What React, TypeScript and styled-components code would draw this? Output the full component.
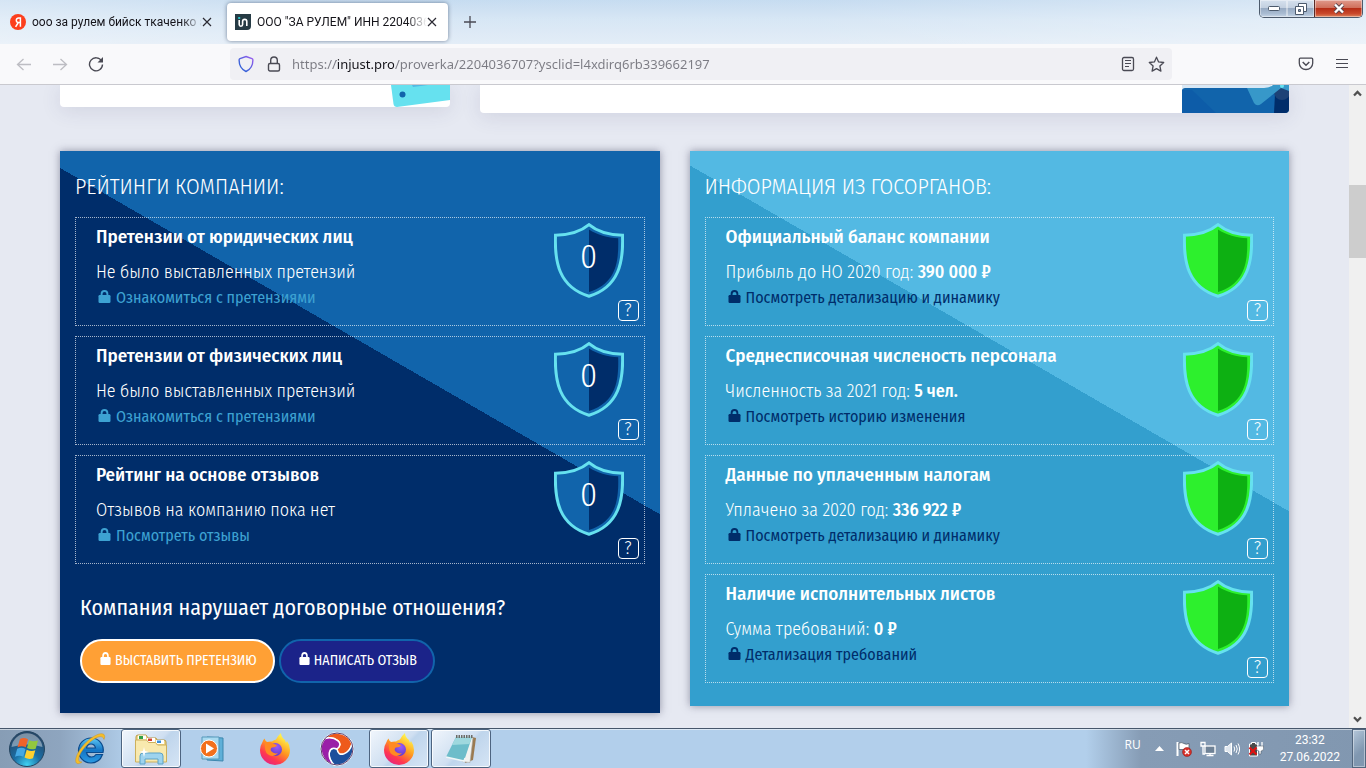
import React from "react";
import styled, { createGlobalStyle } from "styled-components";

const siteFont = `"Fira Sans Condensed", "Liberation Sans Narrow", Roboto, sans-serif`;
const chromeFont = `"Segoe UI", "Open Sans", "Noto Sans", sans-serif`;

const GlobalStyle = createGlobalStyle`
  *, *::before, *::after { box-sizing: border-box; }
  body { margin: 0; background: #e6e9f2; }
  button, input { font: inherit; color: inherit; margin: 0; }
  button { cursor: pointer; }
`;

const Desktop = styled.div`
  display: flex;
  flex-direction: column;
  height: 100vh;
  font-family: ${chromeFont};
`;

/* ---------- browser chrome ---------- */

const TitleBar = styled.header`
  display: flex;
  align-items: flex-start;
  justify-content: space-between;
  flex: none;
  height: 44px;
  background:
    linear-gradient(100deg, rgba(255, 255, 255, 0.35) 0%, rgba(255, 255, 255, 0.1) 30%, rgba(255, 255, 255, 0.1) 60%, rgba(255, 255, 255, 0.4) 100%),
    linear-gradient(#c0d8ef, #d3e4f4 45%, #e0ebf6);
`;

const TabStrip = styled.nav`
  display: flex;
  align-items: center;
  gap: 8px;
  padding: 3px 0 0 2px;
`;

const Tab = styled.div<{ $active?: boolean }>`
  display: flex;
  align-items: center;
  width: ${(p) => (p.$active ? 221 : 217)}px;
  height: 38px;
  padding: 0 ${(p) => (p.$active ? 11 : 7)}px 0 8px;
  border-radius: 4px;
  background: ${(p) => (p.$active ? "#fff" : "transparent")};
  box-shadow: ${(p) => (p.$active ? "0 0 4px rgba(40, 60, 90, 0.6)" : "none")};
`;

const TabLabel = styled.button`
  display: flex;
  align-items: center;
  gap: 6px;
  flex: 1;
  min-width: 0;
  padding: 0;
  border: 0;
  background: none;
  font-family: Roboto, sans-serif;
  font-size: 12px;
  line-height: 20px;
  color: #15141a;
  text-align: left;

  svg { flex: none; }
`;

const TabTitle = styled.span`
  flex: 1;
  overflow: hidden;
  white-space: nowrap;
  mask-image: linear-gradient(to left, transparent, #000 20px);
`;

const IconButton = styled.button`
  display: grid;
  place-items: center;
  flex: none;
  padding: 0;
  border: 0;
  background: none;
  color: #5b5b66;
`;

const NewTab = styled(IconButton)`
  width: 28px;
  height: 38px;
`;

const WindowButtons = styled.div`
  display: flex;
  margin-right: 3px;
  border: 1px solid #4c5a6c;
  border-top: 0;
  border-radius: 0 0 5px 5px;
  overflow: hidden;
`;

const WindowButton = styled.button<{ $close?: boolean }>`
  display: grid;
  place-items: center;
  width: ${(p) => (p.$close ? 48 : 27)}px;
  height: 17px;
  padding: 0;
  border: 0;
  border-left: ${(p) => (p.$close ? "1px solid #5a2a26" : "0")};
  box-shadow: inset 0 0 0 1px rgba(255, 255, 255, 0.4);
  background: ${(p) =>
    p.$close
      ? "linear-gradient(#e09a8c, #d0705c 45%, #b62e17 50%, #c9492c 80%, #dd8660)"
      : "linear-gradient(#d6e1ee, #c3d0e0 45%, #98abc3 50%, #a9bcd2 80%, #c8d6e6)"};
`;

const Toolbar = styled.div`
  display: flex;
  align-items: center;
  flex: none;
  height: 41px;
  padding: 0 14px;
  background: #f9f9fb;
  border-bottom: 1px solid #c9c9cf;
`;

const NavButtons = styled.div`
  display: flex;
  gap: 16px;
  width: 216px;

  ${IconButton} { width: 20px; height: 32px; }
`;

const AddressBar = styled.div`
  display: flex;
  align-items: center;
  gap: 8px;
  flex: 1;
  max-width: 942px;
  height: 32px;
  padding: 0 6px;
  border-radius: 4px;
  background: #f0f0f4;

  ${IconButton} { width: 20px; height: 32px; }
`;

const Address = styled.input`
  flex: 1;
  min-width: 0;
  height: 24px;
  padding: 0;
  border: 0;
  outline: 0;
  font-family: "Noto Sans", sans-serif;
  font-size: 13px;
  color: transparent;
  background: linear-gradient(to right, #7b7b83 44px, #15141a 44px, #15141a 102px, #7b7b83 102px);
  background-clip: text;
`;

const ToolbarEnd = styled.div`
  display: flex;
  gap: 16px;
  margin-left: auto;

  ${IconButton} { width: 20px; height: 32px; }
`;

/* ---------- page ---------- */

const Viewport = styled.div`
  display: flex;
  flex: 1;
  min-height: 0;
`;

const Page = styled.main`
  flex: 1;
  min-width: 0;
  padding: 0 60px;
  overflow-y: auto;
  scrollbar-width: none;
  background: #e6e9f2;
  font-family: ${siteFont};
`;

const Scrollbar = styled.div`
  display: flex;
  flex-direction: column;
  align-items: center;
  justify-content: space-between;
  flex: none;
  width: 17px;
  padding: 5px 0;
  background: linear-gradient(#cdcdcd, #cdcdcd) 0 100px / 17px 73px no-repeat #f0f0f0;
`;

const UpperCards = styled.div`
  display: flex;
  align-items: flex-start;
  gap: 30px;
  height: 66px;
`;

const UpperCard = styled.section<{ $wide?: boolean }>`
  display: flex;
  justify-content: flex-end;
  flex: ${(p) => (p.$wide ? "1" : "0 0 390px")};
  height: ${(p) => (p.$wide ? 28 : 22)}px;
  border-radius: 0 0 4px 4px;
  background: #fff;
  box-shadow: 0 4px 20px rgba(60, 60, 110, 0.12);
  overflow: hidden;
`;

const Panels = styled.div`
  display: flex;
  align-items: flex-start;
  gap: 30px;
`;

const Panel = styled.section<{ $tone: "dark" | "light" }>`
  flex: 1;
  min-width: 0;
  padding: 20px 15px ${(p) => (p.$tone === "dark" ? 30 : 23)}px;
  color: #fff;
  background: ${(p) =>
    p.$tone === "dark"
      ? "linear-gradient(210deg, #1164ab 40%, #002d6a 40%)"
      : "linear-gradient(210deg, #53b9e3 40%, #339fce 40%)"};
  box-shadow: 0 0 8px rgba(60, 60, 90, 0.5);
`;

const PanelTitle = styled.h2`
  margin: 0 0 14px;
  font-size: 22px;
  line-height: 32px;
  font-weight: 300;
  text-transform: uppercase;
`;

const Rows = styled.div`
  display: flex;
  flex-direction: column;
  gap: 10px;
`;

const Row = styled.article`
  display: flex;
  justify-content: space-between;
  padding: 5px 5px 4px 20px;
  border: 1px dotted rgba(255, 255, 255, 0.65);
`;

const RowTitle = styled.h3`
  margin: 0 0 8px;
  font-size: 19px;
  line-height: 28px;
  font-weight: 500;
`;

const RowText = styled.p`
  margin: 0;
  font-size: 18px;
  line-height: 26px;
  font-weight: 300;

  b { font-weight: 500; }
`;

const RowLink = styled.a<{ $tone: "dark" | "light" }>`
  display: flex;
  align-items: center;
  gap: 5px;
  padding-left: 2px;
  font-size: 16px;
  line-height: 26px;
  text-decoration: none;
  color: ${(p) => (p.$tone === "dark" ? "#3da2d2" : "#002d6a")};
`;

const LockSlot = styled.span`
  display: flex;
  padding-bottom: 3px;
`;

const RowAside = styled.div`
  display: flex;
  flex-direction: column;
  align-items: flex-end;
  gap: 2px;
`;

const ShieldBox = styled.div`
  display: grid;
  place-items: center;
  margin-right: 15px;

  > * { grid-area: 1 / 1; }
`;

const Score = styled.span`
  padding-bottom: 8px;
  font-size: 34px;
  line-height: 40px;
  font-weight: 300;
`;

const Help = styled.button`
  width: 21px;
  height: 21px;
  padding: 0;
  border: 1px solid #fff;
  border-radius: 4px;
  background: none;
  font-size: 18px;
  font-weight: 300;
  line-height: 19px;
`;

const Claim = styled.div`
  padding: 29px 5px 0;
`;

const ClaimTitle = styled.h3`
  margin: 0 0 16px;
  font-size: 22px;
  line-height: 30px;
  font-weight: 400;
`;

const ClaimButtons = styled.div`
  display: flex;
  gap: 4px;
`;

const ClaimButton = styled.button<{ $kind: "claim" | "review" }>`
  display: flex;
  align-items: center;
  gap: 4px;
  height: 44px;
  padding: 0 16px 2px 18px;
  border: 2px solid ${(p) => (p.$kind === "claim" ? "#fff" : "#1164ab")};
  border-radius: 22px;
  background: ${(p) => (p.$kind === "claim" ? "#ffa035" : "#1b2389")};
  font-size: 14px;
  text-transform: uppercase;
  white-space: nowrap;
`;

/* ---------- taskbar ---------- */

const Taskbar = styled.footer`
  display: flex;
  align-items: center;
  flex: none;
  height: 40px;
  border-top: 1px solid #46566b;
  box-shadow: inset 0 1px 0 rgba(255, 255, 255, 0.55);
  background: linear-gradient(to right, #879db5 0, #8ea5bf 60px, #b2cfeb 130px, #b2cfeb calc(100% - 280px), #869cb5 calc(100% - 225px), #8197b0 100%);
`;

const StartButton = styled.button`
  display: grid;
  place-items: center;
  width: 54px;
  height: 39px;
  margin-right: 5px;
  padding: 0;
  border: 0;
  background: none;
`;

const TaskButton = styled.button<{ $open?: boolean }>`
  display: grid;
  place-items: center;
  width: 60px;
  height: 39px;
  margin-right: 2px;
  padding: 0;
  border: 1px solid ${(p) => (p.$open ? "#4d6480" : "transparent")};
  border-radius: 3px;
  background: ${(p) => (p.$open ? "linear-gradient(135deg, #f1f6fc, #cfdff1 50%, #bfd5ec 55%, #d6e5f5)" : "none")};
  box-shadow: ${(p) => (p.$open ? "inset 0 0 0 1px rgba(255, 255, 255, 0.8)" : "none")};
`;

const Tray = styled.div`
  display: flex;
  align-items: center;
  gap: 8px;
  height: 100%;
  margin-left: auto;
  color: #fff;
  font-size: 12px;
`;

const Language = styled.span`
  margin: 0 6px 8px 0;
`;

const Clock = styled.time`
  margin: 0 4px 0 8px;
  font-family: Roboto, sans-serif;
  line-height: 17px;
  text-align: center;
`;

const ShowDesktop = styled.button`
  width: 14px;
  height: 100%;
  padding: 0;
  border: 1px solid #52667e;
  background: linear-gradient(135deg, #b5c7da, #8097b0 60%);
  box-shadow: inset 0 0 0 1px rgba(255, 255, 255, 0.4);
`;

/* ---------- drawings ---------- */

const Cross = () => (
  <svg width="10" height="10" viewBox="0 0 10 10" stroke="#2b2a33" strokeWidth="1.2" fill="none" aria-hidden="true">
    <path d="M1 1l8 8M9 1L1 9" />
  </svg>
);

const YandexIcon = () => (
  <svg width="16" height="16" viewBox="0 0 16 16" aria-hidden="true">
    <circle cx="8" cy="8" r="8" fill="#fc3f1d" />
    <path d="M10.4 3.2v9.6M10.4 3.9H8.6a2.3 2.3 0 0 0 0 4.6h1.8M8.3 8.5L5.6 12.8" stroke="#fff" strokeWidth="1.5" fill="none" />
  </svg>
);

const InjustIcon = () => (
  <svg width="16" height="16" viewBox="0 0 16 16" aria-hidden="true">
    <path d="M0 0h16v12a4 4 0 0 1-4 4H0z" fill="#263b45" />
    <path d="M4.2 6v4.500a1.700 1.700 0 0 0 3.400 0V7.500a2.100 2.100 0 0 1 4.200 0V12" stroke="#fff" strokeWidth="1.6" fill="none" />
    <rect x="3.200" y="3" width="2" height="2" fill="#27c4c9" />
  </svg>
);

const Arrow = ({ back }: { back?: boolean }) => (
  <svg width="16" height="16" viewBox="0 0 16 16" stroke="#bdbdc3" strokeWidth="1.3" fill="none" aria-hidden="true">
    {back ? <path d="M15 8.500H1.500M7.500 3L1.500 8.500l6 5.500" /> : <path d="M1 8.500h13.500M8.500 3l6 5.500-6 5.500" />}
  </svg>
);

const Reload = () => (
  <svg width="16" height="16" viewBox="0 0 16 16" fill="none" aria-hidden="true">
    <path d="M13.600 5A6.500 6.500 0 1 0 14.500 8.500" stroke="#4a4a54" strokeWidth="1.400" />
    <path d="M15 1v5.500H9.500z" fill="#4a4a54" />
  </svg>
);

const TrackingShield = () => (
  <svg width="16" height="18" viewBox="0 0 16 18" fill="none" aria-hidden="true">
    <defs>
      <linearGradient id="tracking" x1="0" y1="1" x2="1" y2="0">
        <stop offset="0.3" stopColor="#3a62d8" />
        <stop offset="1" stopColor="#a05cf0" />
      </linearGradient>
    </defs>
    <path d="M8 1.500l6 2.200c.7.3.9.7.9 1.300 0 5-2 9.300-6.900 11.500C3.200 14.300 1.100 10 1.100 5c0-.6.2-1 .9-1.300z" stroke="url(#tracking)" strokeWidth="1.400" />
  </svg>
);

const Padlock = () => (
  <svg width="14" height="16" viewBox="0 0 14 16" stroke="#4a4a54" strokeWidth="1.400" fill="none" aria-hidden="true">
    <rect x="1.500" y="7.500" width="11" height="7.500" rx="1.500" />
    <path d="M3.700 7.500V4.300a3.300 3.300 0 0 1 6.600 0v3.200" />
  </svg>
);

const Reader = () => (
  <svg width="14" height="16" viewBox="0 0 14 16" stroke="#4a4a54" strokeWidth="1.300" fill="none" aria-hidden="true">
    <rect x="1.500" y="1.500" width="11" height="13" rx="1.500" />
    <path d="M4 4.500h6M4 7.500h6M4 10.500h4" strokeWidth="1.200" />
  </svg>
);

const Star = () => (
  <svg width="17" height="17" viewBox="0 0 17 17" stroke="#4a4a54" strokeWidth="1.300" strokeLinejoin="round" fill="none" aria-hidden="true">
    <path d="M8.500 1.200l2.100 4.700 5.100.6-3.800 3.500 1 5.100-4.400-2.500-4.400 2.500 1-5.100L1.300 6.500l5.100-.6z" />
  </svg>
);

const Pocket = () => (
  <svg width="16" height="14" viewBox="0 0 16 14" stroke="#4a4a54" strokeWidth="1.300" fill="none" aria-hidden="true">
    <path d="M2.300 1.200h11.400c.6 0 1 .4 1 1v4a6.700 6.300 0 0 1-13.400 0v-4c0-.6.4-1 1-1z" />
    <path d="M4.700 5L8 8.200 11.300 5" strokeWidth="1.500" />
  </svg>
);

const Menu = () => (
  <svg width="14" height="12" viewBox="0 0 14 12" stroke="#4a4a54" aria-hidden="true">
    <path d="M1 1.500h12M1 5.500h12M1 9.500h12" />
  </svg>
);

const ScrollArrow = ({ down }: { down?: boolean }) => (
  <svg width="9" height="7" viewBox="0 0 9 7" stroke="#505050" strokeWidth="2.200" fill="none" aria-hidden="true">
    <path d={down ? "M1 1.200l3.500 3.600L8 1.200" : "M1 5.500l3.500-3.600L8 5.500"} />
  </svg>
);

const LockIcon = ({ size = 13 }: { size?: number }) => (
  <LockSlot>
    <svg width={size} height="13" viewBox="0 0 13 13" preserveAspectRatio="none" aria-hidden="true">
      <path d="M3.600 6V3.900a2.900 2.900 0 0 1 5.800 0V6" stroke="currentColor" strokeWidth="1.900" fill="none" />
      <rect x="0.500" y="5" width="12" height="8" rx="1.200" fill="currentColor" />
    </svg>
  </LockSlot>
);

const Shield = ({ tone }: { tone: "dark" | "light" }) => (
  <svg width="70" height="75" viewBox="0 0 70 75" aria-hidden="true">
    <path
      d="M35 1.700C27 8.500 14 12 1.500 12.200c-1 26 3 51.800 33.500 61C65.500 64 69.500 38.200 68.500 12.200 56 12 43 8.500 35 1.700z"
      fill={tone === "dark" ? "#1164ab" : "#2df02d"}
      stroke="#66e1ef"
      strokeWidth="3"
    />
    <path
      d="M35 6.500c8 5.500 19 8.300 29.200 8.800.6 24-2 45-29.200 53.700z"
      fill={tone === "dark" ? "#002d6a" : "#0db012"}
    />
  </svg>
);

const TicketArt = () => (
  <svg width="59" height="22" viewBox="0 0 59 22" aria-hidden="true">
    <path d="M0 0h59v15L6 22q-3 0-3.500-3z" fill="#66e1ef" />
    <path d="M21 0h16l-15 2z" fill="#53b9e3" />
    <circle cx="11.500" cy="9.500" r="3" fill="#1164ab" />
  </svg>
);

const BriefcaseArt = () => (
  <svg width="107" height="28" viewBox="0 0 107 28" aria-hidden="true">
    <path d="M0 5q0-2 3-2h104v25H0z" fill="#1164ab" />
    <path d="M0 5h10l24 23H0z" fill="#0d5ca8" />
    <path d="M0 0h90q-3 3-9 3H2q-2 0-2 2z" fill="#d9e8f5" />
    <path d="M93 9l14-7v26H92z" fill="#002d6a" />
    <circle cx="100" cy="7" r="8" fill="#1d4276" />
    <path d="M65 3h17q6 0 9-3h16v6l-8-3L79 19q-4 3-7-1z" fill="#3798c9" />
    <circle cx="100" cy="1" r="2" fill="#66e1ef" />
  </svg>
);

const WindowsOrb = () => (
  <svg width="38" height="38" viewBox="0 0 38 38" aria-hidden="true">
    <defs>
      <radialGradient id="orb" cx="0.5" cy="0.95" r="0.85">
        <stop offset="0" stopColor="#3fd2f2" />
        <stop offset="0.45" stopColor="#1b6ea5" />
        <stop offset="1" stopColor="#26486a" />
      </radialGradient>
    </defs>
    <circle cx="19" cy="19" r="17.500" fill="url(#orb)" stroke="#24445f" />
    <path d="M3.500 17a15.600 15.600 0 0 1 31 0q-15-5-31 0z" fill="#fff" opacity="0.4" />
    <path d="M12 9q4-2 8 .3l-2.200 8q-4-2-8.300 0z" fill="#f0632a" />
    <path d="M21.200 10.200q4 2 8.800.3l-2.300 8.200q-4.300 1.600-8.700-.7z" fill="#93c73e" />
    <path d="M9.200 18.800q4.200-2 8.300.2l-2.200 7.800q-4-2-8.300 0z" fill="#45a8e4" />
    <path d="M18.700 19.700q4.300 2.200 8.600.6l-2.300 8q-4.200 1.600-8.500-.7z" fill="#ffd030" />
  </svg>
);

const ExplorerE = () => (
  <svg width="34" height="34" viewBox="0 0 34 34" aria-hidden="true">
    <defs>
      <linearGradient id="ie" x1="0" y1="0" x2="0" y2="1">
        <stop offset="0" stopColor="#5cc8f4" />
        <stop offset="0.5" stopColor="#1474c4" />
        <stop offset="1" stopColor="#2b9be4" />
      </linearGradient>
    </defs>
    <path
      d="M19 6a12 12 0 0 1 12 14.500H14.500q1 4.500 5 4.500 3 0 4.500-2.500h6.500Q27.500 31 19 31A12.500 12.500 0 0 1 19 6zM14.500 16h9q-.8-4-4.500-4t-4.500 4z"
      fill="url(#ie)"
      stroke="#0b4a8c"
      strokeWidth="1.200"
      fillRule="evenodd"
    />
    <path d="M10 30C3 35 1 28 8 17.500 15 7 28-1 32 2.500q1.500 2 0 5-1-4-6-2.500C17 8.500 7.500 20 6.500 27q-.2 3.500 3.500 3z" fill="#f4bd2a" stroke="#c98d12" strokeWidth="0.400" />
  </svg>
);

const FolderIcon = () => (
  <svg width="34" height="32" viewBox="0 0 34 32" aria-hidden="true">
    <path d="M2 4q0-2 2-2h8l2 3h8l1 2h7q2 0 2 2v19H2z" fill="#f0d788" stroke="#b99a48" />
    <path d="M4 2.500h8v4H4z" fill="#fff" />
    <path d="M5 3h4v3H5z" fill="#2fa045" />
    <path d="M13 5h8v4h-8z" fill="#fff" />
    <path d="M14 5.500h4v2.500h-4z" fill="#d4402c" />
    <path d="M22 7h8v4h-8z" fill="#fff" />
    <path d="M23 7.500h4V10h-4z" fill="#3a8fd8" />
    <path d="M1.500 7h11l2 2.500h7l2 2.500h9v17h-31z" fill="#f8e9ae" stroke="#cdb05c" />
    <path d="M6 31v-8q0-3 3-3h17q3 0 3 3v8h-5v-5H11v5z" fill="#9dd3ee" stroke="#5ca3c8" />
    <path d="M10 14l1 4 4 1-4 1-1 4-1-4-4-1 4-1z" fill="#fff" />
  </svg>
);

const PlayerIcon = () => (
  <svg width="30" height="28" viewBox="0 0 30 28" aria-hidden="true">
    <path d="M9 2l16 1v23l-16-1z" fill="#5fb0d8" stroke="#3d87ae" />
    <path d="M4 2h17v22H4z" fill="#a9daf0" stroke="#5798ba" />
    <circle cx="11" cy="13.500" r="8.500" fill="#f3701c" stroke="#fff" />
    <path d="M8 8.500l8 5-8 5z" fill="#fff" />
  </svg>
);

const FirefoxIcon = () => (
  <svg width="32" height="32" viewBox="0 0 32 32" aria-hidden="true">
    <defs>
      <linearGradient id="fox" x1="0.8" y1="0" x2="0.2" y2="1">
        <stop offset="0.1" stopColor="#fff04a" />
        <stop offset="0.45" stopColor="#ff9a1f" />
        <stop offset="0.75" stopColor="#ff3750" />
        <stop offset="1" stopColor="#e0218a" />
      </linearGradient>
      <radialGradient id="globe" cx="0.6" cy="0.3" r="0.8">
        <stop offset="0" stopColor="#9a5cf5" />
        <stop offset="1" stopColor="#5b35c8" />
      </radialGradient>
    </defs>
    <path d="M3.500 9q.5-2 2-3.500.5 2 2.500 3.500 2-.8 5-.5 1-1 4-2Q18.500 3 22 0q0 4 4 7l1 3 1-2q3 4 3 9a15 15 0 1 1-30 0q0-4 2.500-8z" fill="url(#fox)" />
    <circle cx="16.500" cy="16.500" r="6.500" fill="url(#globe)" />
    <path d="M6 9.500q5-1.500 9 1.500l3 1q-1 2.500-5 2.500-2 1-1 3.500 3 3.500 7 2-3 4-8 2.500-5-2-5-8z" fill="#ff8a22" />
  </svg>
);

const blade = "M17 17C25 11 15 4 5 6.500A16 16 0 0 1 32.100 11.860C29.260 21.770 18.200 26.930 17 17z";

const SwirlIcon = () => (
  <svg width="34" height="34" viewBox="0 0 34 34" stroke="#fff" strokeWidth="1.500" aria-hidden="true">
    <path d={blade} fill="#ee5a1c" />
    <path d={blade} fill="#1d4f9c" transform="rotate(120 17 17)" />
    <path d={blade} fill="#9a1fa8" transform="rotate(240 17 17)" />
    <circle cx="17" cy="17" r="16" fill="none" stroke="#5b3c6b" strokeWidth="1" />
  </svg>
);

const NotepadIcon = () => (
  <svg width="32" height="32" viewBox="0 0 32 32" aria-hidden="true">
    <path d="M27 4l4 1-3 22-8 3z" fill="#9b7a50" />
    <path d="M25 4l3 .5-3 25-8-1z" fill="#f3f3f0" stroke="#a5a5a0" strokeWidth="0.600" />
    <path d="M11 4h16l-8 24L1 24z" fill="#6dbdca" />
    <path d="M11 4h16l-2.500 7L7 12z" fill="#9fd8de" />
    <path d="M1 24l18 4 1-3" fill="none" stroke="#eef6f7" strokeWidth="1.500" />
    <path d="M11 3.500h17" stroke="#6b6b66" strokeWidth="3" strokeDasharray="1.500 1" />
  </svg>
);

const TrayArrow = styled.svg`
  margin-right: 4px;
`;

const FlagIcon = () => (
  <svg width="16" height="16" viewBox="0 0 16 16" aria-hidden="true">
    <path d="M1.500 1v14" stroke="#fff" strokeWidth="2" />
    <path d="M3 2q3-1 5 .5t5 0v6H3z" fill="#fff" stroke="#44505e" strokeWidth="0.700" />
    <circle cx="11" cy="11" r="4.500" fill="#d6302a" stroke="#8c1713" strokeWidth="0.500" />
    <path d="M9 9l4 4M13 9l-4 4" stroke="#fff" strokeWidth="1.500" />
  </svg>
);

const NetworkIcon = () => (
  <svg width="16" height="16" viewBox="0 0 16 16" aria-hidden="true">
    <rect x="5" y="5" width="10" height="7.500" fill="#6f8296" stroke="#fff" strokeWidth="1.300" />
    <path d="M6.500 14.500h7M10 12.500v2" stroke="#fff" strokeWidth="1.300" />
    <path d="M1 1.500h4v3.500H1zM3 5v8h2" stroke="#fff" strokeWidth="1.300" fill="none" />
  </svg>
);

const SoundIcon = () => (
  <svg width="16" height="16" viewBox="0 0 16 16" aria-hidden="true">
    <path d="M1 5.500h2.500L7.500 2v12l-4-3.500H1z" fill="#dfe6ee" stroke="#fff" />
    <path d="M10 5.500q1.500 2.500 0 5M12 4q2.500 4 0 8M14 2.500q3.200 5.500 0 11" stroke="#fff" fill="none" />
  </svg>
);

const BatteryIcon = () => (
  <svg width="16" height="16" viewBox="0 0 16 16" aria-hidden="true">
    <path d="M1.500 3h2V1.500h4V3h2v12h-8z" fill="#4a4a4a" stroke="#fff" />
    <path d="M10 1v4M14 1v4" stroke="#fff" strokeWidth="1.300" />
    <path d="M8.500 5h7v2.500q0 2.500-2.500 2.500v3h-2v-3q-2.500 0-2.500-2.500z" fill="#fff" stroke="#44505e" strokeWidth="0.500" />
    <path d="M1.500 6.500l7 7M8.500 6.500l-7 7" stroke="#e01212" strokeWidth="2.200" />
  </svg>
);

/* ---------- data ---------- */

type RowData = { title: string; text: string; value?: string; link: string; score?: string };

const ratings: RowData[] = [
  { title: "Претензии от юридических лиц", text: "Не было выставленных претензий", link: "Ознакомиться с претензиями", score: "0" },
  { title: "Претензии от физических лиц", text: "Не было выставленных претензий", link: "Ознакомиться с претензиями", score: "0" },
  { title: "Рейтинг на основе отзывов", text: "Отзывов на компанию пока нет", link: "Посмотреть отзывы", score: "0" },
];

const official: RowData[] = [
  { title: "Официальный баланс компании", text: "Прибыль до НО 2020 год:", value: "390 000 ₽", link: "Посмотреть детализацию и динамику" },
  { title: "Среднесписочная численость персонала", text: "Численность за 2021 год:", value: "5 чел.", link: "Посмотреть историю изменения" },
  { title: "Данные по уплаченным налогам", text: "Уплачено за 2020 год:", value: "336 922 ₽", link: "Посмотреть детализацию и динамику" },
  { title: "Наличие исполнительных листов", text: "Сумма требований:", value: "0 ₽", link: "Детализация требований" },
];

const RowList = ({ rows, tone }: { rows: RowData[]; tone: "dark" | "light" }) => (
  <Rows>
    {rows.map((row) => (
      <Row key={row.title}>
        <div>
          <RowTitle>{row.title}</RowTitle>
          <RowText>
            {row.text}
            {row.value && <> <b>{row.value}</b></>}
          </RowText>
          <RowLink href="#" $tone={tone}>
            <LockIcon />
            {row.link}
          </RowLink>
        </div>
        <RowAside>
          <ShieldBox>
            <Shield tone={tone} />
            {row.score && <Score>{row.score}</Score>}
          </ShieldBox>
          <Help type="button">?</Help>
        </RowAside>
      </Row>
    ))}
  </Rows>
);

export default function App() {
  return (
    <Desktop>
      <GlobalStyle />
      <TitleBar>
        <TabStrip>
          <Tab>
            <TabLabel type="button">
              <YandexIcon />
              <TabTitle>ооо за рулем бийск ткаченко а</TabTitle>
            </TabLabel>
            <IconButton type="button" aria-label="Закрыть вкладку"><Cross /></IconButton>
          </Tab>
          <Tab $active>
            <TabLabel type="button">
              <InjustIcon />
              <TabTitle>ООО "ЗА РУЛЕМ" ИНН 2204036</TabTitle>
            </TabLabel>
            <IconButton type="button" aria-label="Закрыть вкладку"><Cross /></IconButton>
          </Tab>
          <NewTab type="button" aria-label="Новая вкладка">
            <svg width="12" height="12" viewBox="0 0 12 12" stroke="#4a4a54" strokeWidth="1.300" aria-hidden="true">
              <path d="M6 0v12M0 6h12" />
            </svg>
          </NewTab>
        </TabStrip>
        <WindowButtons>
          <WindowButton type="button" aria-label="Свернуть">
            <svg width="12" height="5" viewBox="0 0 12 5" aria-hidden="true"><rect x="0.500" y="0.500" width="11" height="4" rx="1" fill="#fff" stroke="#4c5a6c" /></svg>
          </WindowButton>
          <WindowButton type="button" aria-label="Восстановить">
            <svg width="12" height="12" viewBox="0 0 12 12" stroke="#4c5a6c" fill="#fff" aria-hidden="true">
              <path d="M3.500.500h8v8h-8z" /><path d="M.500 3.500h8v8h-8z" /><path d="M3.500 6.500h2v2h-2z" fill="#8ea2ba" />
            </svg>
          </WindowButton>
          <WindowButton type="button" $close aria-label="Закрыть">
            <svg width="12" height="11" viewBox="0 0 12 11" aria-hidden="true">
              <path d="M2 1.500l8 8M10 1.500l-8 8" stroke="#5a4650" strokeWidth="4" />
              <path d="M2 1.500l8 8M10 1.500l-8 8" stroke="#fff" strokeWidth="2.400" />
            </svg>
          </WindowButton>
        </WindowButtons>
      </TitleBar>

      <Toolbar>
        <NavButtons>
          <IconButton type="button" aria-label="Назад"><Arrow back /></IconButton>
          <IconButton type="button" aria-label="Вперёд"><Arrow /></IconButton>
          <IconButton type="button" aria-label="Обновить"><Reload /></IconButton>
        </NavButtons>
        <AddressBar>
          <IconButton type="button" aria-label="Защита"><TrackingShield /></IconButton>
          <IconButton type="button" aria-label="Соединение"><Padlock /></IconButton>
          <Address aria-label="Адрес" defaultValue="https://injust.pro/proverka/2204036707?ysclid=l4xdirq6rb339662197" />
          <IconButton type="button" aria-label="Режим чтения"><Reader /></IconButton>
          <IconButton type="button" aria-label="Закладка"><Star /></IconButton>
        </AddressBar>
        <ToolbarEnd>
          <IconButton type="button" aria-label="Pocket"><Pocket /></IconButton>
          <IconButton type="button" aria-label="Меню"><Menu /></IconButton>
        </ToolbarEnd>
      </Toolbar>

      <Viewport>
        <Page>
          <UpperCards>
            <UpperCard><TicketArt /></UpperCard>
            <UpperCard $wide><BriefcaseArt /></UpperCard>
          </UpperCards>
          <Panels>
            <Panel $tone="dark">
              <PanelTitle>Рейтинги компании:</PanelTitle>
              <RowList rows={ratings} tone="dark" />
              <Claim>
                <ClaimTitle>Компания нарушает договорные отношения?</ClaimTitle>
                <ClaimButtons>
                  <ClaimButton type="button" $kind="claim"><LockIcon size={11} />Выставить претензию</ClaimButton>
                  <ClaimButton type="button" $kind="review"><LockIcon size={11} />Написать отзыв</ClaimButton>
                </ClaimButtons>
              </Claim>
            </Panel>
            <Panel $tone="light">
              <PanelTitle>Информация из госорганов:</PanelTitle>
              <RowList rows={official} tone="light" />
            </Panel>
          </Panels>
        </Page>
        <Scrollbar>
          <ScrollArrow />
          <ScrollArrow down />
        </Scrollbar>
      </Viewport>

      <Taskbar>
        <StartButton type="button" aria-label="Пуск"><WindowsOrb /></StartButton>
        <TaskButton type="button" aria-label="Internet Explorer"><ExplorerE /></TaskButton>
        <TaskButton type="button" $open aria-label="Проводник"><FolderIcon /></TaskButton>
        <TaskButton type="button" aria-label="Проигрыватель"><PlayerIcon /></TaskButton>
        <TaskButton type="button" aria-label="Firefox"><FirefoxIcon /></TaskButton>
        <TaskButton type="button" aria-label="Браузер"><SwirlIcon /></TaskButton>
        <TaskButton type="button" $open aria-label="Firefox, окно"><FirefoxIcon /></TaskButton>
        <TaskButton type="button" $open aria-label="Блокнот"><NotepadIcon /></TaskButton>
        <Tray>
          <Language>RU</Language>
          <TrayArrow width="9" height="5" viewBox="0 0 9 5" aria-hidden="true"><path d="M4.500 0L9 5H0z" fill="#fff" /></TrayArrow>
          <FlagIcon />
          <NetworkIcon />
          <SoundIcon />
          <BatteryIcon />
          <Clock>23:32<br />27.06.2022</Clock>
          <ShowDesktop type="button" aria-label="Показать рабочий стол" />
        </Tray>
      </Taskbar>
    </Desktop>
  );
}
